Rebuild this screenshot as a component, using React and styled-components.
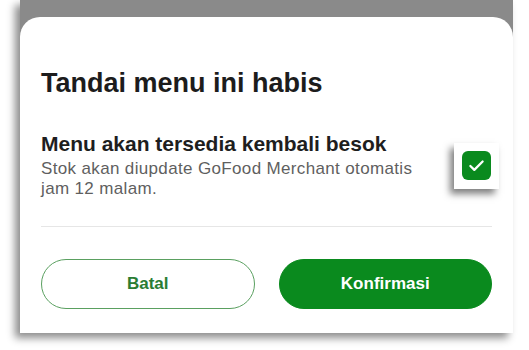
import React from "react";
import styled, { createGlobalStyle } from "styled-components";

const GlobalStyle = createGlobalStyle`
  html, body {
    margin: 0;
    padding: 0;
    background: #ffffff;
  }
  body {
    font-family: "Liberation Sans", Arial, sans-serif;
    -webkit-font-smoothing: antialiased;
  }
`;

const Page = styled.div`
  width: 529px;
  height: 350px;
  background: #ffffff;
  overflow: hidden;
`;

const Frame = styled.div`
  margin-left: 20px;
  width: 493px;
  height: 333px;
  background: #8a8a8a;
  box-shadow: -5px 5px 8px rgba(0, 0, 0, 0.45);
  display: flex;
  flex-direction: column;
`;

const Sheet = styled.section`
  margin-top: 17px;
  flex: 1;
  background: #ffffff;
  border-radius: 20px 20px 0 0;
  padding: 50px 21px 0 21px;
  display: flex;
  flex-direction: column;
`;

const Title = styled.h2`
  margin: 0;
  font-size: 27px;
  line-height: 32px;
  font-weight: 700;
  color: #1c1c1c;
`;

const OptionRow = styled.div`
  margin-top: 33px;
  display: flex;
  align-items: center;
  justify-content: space-between;
`;

const OptionText = styled.div`
  display: flex;
  flex-direction: column;
`;

const OptionTitle = styled.div`
  font-size: 21px;
  line-height: 24px;
  font-weight: 700;
  color: #1e1e1e;
`;

const OptionDesc = styled.p`
  margin: 3px 0 0;
  width: 392px;
  font-size: 17px;
  line-height: 20px;
  letter-spacing: 0.35px;
  color: #5f5f5f;
`;

const CheckHolder = styled.div`
  margin-right: -7px;
  width: 45px;
  height: 46px;
  background: #ffffff;
  box-shadow: -4px 5px 7px rgba(0, 0, 0, 0.5);
  display: flex;
  align-items: center;
  justify-content: center;
`;

const CheckBox = styled.div`
  width: 29px;
  height: 29px;
  border-radius: 6px;
  background: #0a8a1e;
  display: flex;
  align-items: center;
  justify-content: center;
`;

const Divider = styled.hr`
  margin: 27px 0 0;
  border: 0;
  border-top: 1px solid #e6e6e6;
`;

const Actions = styled.div`
  margin-top: 32px;
  display: grid;
  grid-template-columns: 1fr 1fr;
  gap: 24px;
`;

const Button = styled.button`
  height: 50px;
  border-radius: 25px;
  font-family: inherit;
  font-size: 17px;
  font-weight: 700;
  cursor: pointer;
  border: 1.5px solid ${({ $primary }) => ($primary ? "#0a8a1e" : "#5aa060")};
  background: ${({ $primary }) => ($primary ? "#0a8a1e" : "#ffffff")};
  color: ${({ $primary }) => ($primary ? "#ffffff" : "#2a7d33")};
`;

const App = () => {
  return (
    <>
      <GlobalStyle />
      <Page>
        <Frame>
          <Sheet>
            <Title>Tandai menu ini habis</Title>
            <OptionRow>
              <OptionText>
                <OptionTitle>Menu akan tersedia kembali besok</OptionTitle>
                <OptionDesc>
                  Stok akan diupdate GoFood Merchant otomatis jam 12 malam.
                </OptionDesc>
              </OptionText>
              <CheckHolder>
                <CheckBox>
                  <svg width="21" height="21" viewBox="0 0 24 24" fill="none">
                    <path
                      d="M5 12.5l4.5 4.5L19 7.5"
                      stroke="#ffffff"
                      strokeWidth="2.6"
                      strokeLinecap="round"
                      strokeLinejoin="round"
                    />
                  </svg>
                </CheckBox>
              </CheckHolder>
            </OptionRow>
            <Divider />
            <Actions>
              <Button>Batal</Button>
              <Button $primary>Konfirmasi</Button>
            </Actions>
          </Sheet>
        </Frame>
      </Page>
    </>
  );
};

export default App;
